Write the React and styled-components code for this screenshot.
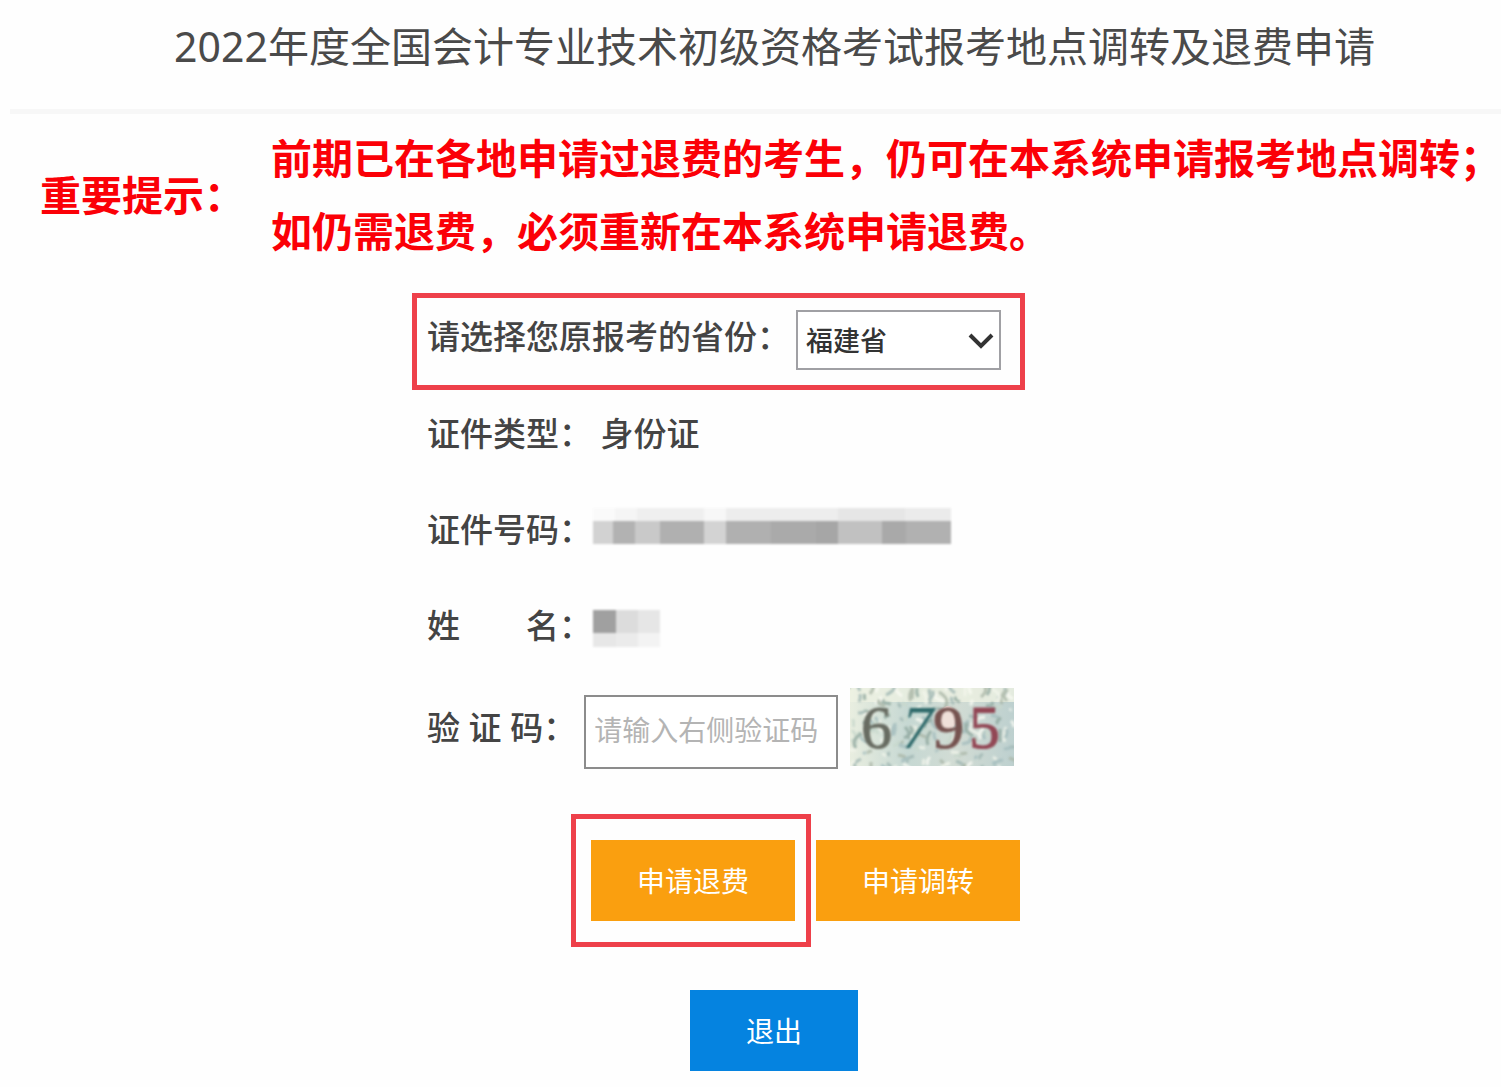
import { useState } from "react";
import styled, { createGlobalStyle } from "styled-components";

const GlobalStyle = createGlobalStyle`
    * {
        box-sizing: border-box;
    }

    body {
        margin: 0;
        background: #fefefe;
        color: #444;
        font-family: "Noto Sans", "Noto Sans CJK SC", sans-serif;
        overflow-x: hidden;
    }

    button, input, select {
        font-family: inherit;
        margin: 0;
    }
`;

const Header = styled.header`
    display: flex;
    align-items: center;
    justify-content: center;
    height: 114px;
    margin-left: 10px;
    padding: 0 0 18px 38px;
    border-bottom: 5px solid #f7f7f7;
`;

const Title = styled.h1`
    margin: 0;
    color: #4a4a4a;
    font-size: 41px;
    font-weight: 400;
    line-height: 60px;
    white-space: nowrap;
`;

const Notice = styled.section`
    display: flex;
    align-items: center;
    gap: 26px;
    padding: 8px 0 0 40px;
    color: #fb0007;
    font-size: 41px;
    font-weight: 700;
    line-height: 73px;
    white-space: nowrap;
`;

const NoticeText = styled.p`
    margin: 0;
`;

const FormArea = styled.main`
    display: flex;
    justify-content: center;
    padding: 25px 64px 16px 0;
`;

const Form = styled.form`
    display: flex;
    flex-direction: column;
    width: 613px;
`;

const Row = styled.div`
    display: flex;
    align-items: center;
    height: 96px;
    padding: 0 0 8px 15px;
    font-size: 33px;
    font-weight: 500;
    line-height: 48px;
    white-space: pre;
`;

const ProvinceRow = styled(Row)`
    align-items: flex-start;
    gap: 6px;
    height: 97px;
    padding: 12px 10px;
    border: 5px solid #ee404a;
`;

const CodeRow = styled(Row)`
    gap: 8px;
    height: 108px;
    padding-bottom: 0;
`;

const Label = styled.label`
    padding: ${props => props.$padding};
    color: #444;
`;

const SelectBox = styled.div`
    position: relative;
    width: 205px;
    height: 60px;

    svg {
        position: absolute;
        top: 22px;
        right: 7px;
        pointer-events: none;
    }
`;

const Select = styled.select`
    appearance: none;
    width: 100%;
    height: 100%;
    padding: 0 8px;
    border: 2px solid #a0a0a4;
    border-radius: 0;
    background: #fff;
    color: #333;
    font-size: 27px;
    font-weight: 500;
`;

const CodeInput = styled.input`
    width: 254px;
    height: 74px;
    padding: 0 8px 4px;
    border: 2px solid #8c8c8c;
    border-radius: 0;
    background: #fff;
    color: #444;
    font-size: 28px;

    &::placeholder {
        color: #b4b4b4;
    }
`;

const CaptchaButton = styled.button`
    height: 78px;
    padding: 0;
    margin: 0 0 11px 4px;
    border: 0;
    background: none;
    cursor: pointer;

    svg {
        display: block;
    }
`;

const Mosaic = styled.span`
    display: flex;
    flex-direction: column;
    margin-left: 1px;
    padding: ${props => props.$padding};
    filter: blur(1px);
`;

const MosaicLine = styled.span`
    display: flex;
    height: ${props => props.$height}px;
`;

const Cell = styled.span`
    width: ${props => props.$width}px;
    background: ${props => props.$color};
`;

const Actions = styled.div`
    display: flex;
    align-items: center;
    gap: 5px;
    margin: 28px 0 43px 159px;
`;

const Highlight = styled.div`
    padding: 21px 11px 21px 15px;
    border: 5px solid #ee404a;
`;

const Button = styled.button`
    width: ${props => props.$width}px;
    height: 81px;
    padding: 0;
    border: 0;
    background: ${props => props.$color};
    color: #fff;
    font-size: 28px;
    line-height: 40px;
    cursor: pointer;
`;

const Exit = styled.div`
    padding-left: 278px;
`;

const idTop = [
    [22, "#fafafa"], [22, "#f5f5f5"], [67, "#efefef"], [22, "#f7f7f7"],
    [112, "#ededed"], [67, "#e6e6e6"], [46, "#ebebeb"],
];
const idBottom = [
    [20, "#d2d2d2"], [22, "#b2b2b2"], [25, "#c9c9c9"], [44, "#b0b0b0"], [22, "#d3d3d3"],
    [45, "#b0b0b0"], [45, "#aaa"], [22, "#a6a6a6"], [44, "#c1c1c1"], [24, "#a9a9a9"], [45, "#b1b1b1"],
];
const nameTop = [[23, "#a0a0a0"], [22, "#dcdcdc"], [22, "#e6e6e6"]];
const nameBottom = [[23, "#e7e7e7"], [22, "#ebebeb"], [22, "#f3f3f3"]];

const Cells = ({ items, height }) => (
    <MosaicLine $height={height}>
        {items.map(([width, color], i) => <Cell key={i} $width={width} $color={color} />)}
    </MosaicLine>
);

// Noise strokes behind the captcha digits
const noiseColors = ["#8fa79e", "#c8d8cc", "#a3bcbd", "#f3f6ec", "#a9b5a6", "#9fb6b2", "#fafbf4"];
const noise = Array.from({ length: 150 }, (_, i) => {
    const x = (i * 61) % 164;
    const y = (i * 37) % 79;
    const dx = ((i * 17) % 29) - 14;
    const dy = ((i * 29) % 31) - 15;
    return { d: `M${x} ${y}q${dx} ${dy / 2} ${dx / 2} ${dy}`, color: noiseColors[(i * 3 + (i >> 2)) % 7] };
});

const Captcha = () => (
    <svg width="164" height="78" viewBox="0 0 164 78" role="img" aria-label="验证码">
        <defs>
            <linearGradient id="paper" x1="0" x2="1" y1="0" y2="0">
                <stop offset="0" stopColor="#e9eee0" />
                <stop offset="0.35" stopColor="#c6d8d3" />
                <stop offset="0.65" stopColor="#d2dcd4" />
                <stop offset="1" stopColor="#bdd0cf" />
            </linearGradient>
            <filter id="soft"><feGaussianBlur stdDeviation="0.8" /></filter>
        </defs>
        <rect width="164" height="78" fill="url(#paper)" />
        <rect width="164" height="14" fill="#edf1e2" opacity="0.8" />
        <g fill="none" strokeWidth="3" opacity="0.8" filter="url(#soft)">
            {noise.map((n, i) => <path key={i} d={n.d} stroke={n.color} />)}
        </g>
        <ellipse cx="98" cy="30" rx="8" ry="12" fill="#efe0d9" />
        <g fontFamily="Liberation Serif, serif" fontSize="62" filter="url(#soft)">
            <text x="11" y="60" fill="#686c62" stroke="#686c62">6</text>
            <text x="52" y="60" fill="#2e696a" fontStyle="italic">7</text>
            <text x="83" y="60" fill="#765250" stroke="#765250">9</text>
            <text x="119" y="60" fill="#924654" stroke="#924654">5</text>
        </g>
    </svg>
);

const App = () => {
    const [province, setProvince] = useState("福建省");
    const [code, setCode] = useState("");

    return (
        <>
            <GlobalStyle />
            <div lang="zh-CN">
                <Header>
                    <Title>2022年度全国会计专业技术初级资格考试报考地点调转及退费申请</Title>
                </Header>
                <Notice>
                    <NoticeText>重要提示：</NoticeText>
                    <NoticeText>
                        前期已在各地申请过退费的考生，仍可在本系统申请报考地点调转；
                        <br />
                        如仍需退费，必须重新在本系统申请退费。
                    </NoticeText>
                </Notice>
                <FormArea>
                    <Form onSubmit={e => e.preventDefault()}>
                        <ProvinceRow>
                            <Label htmlFor="province" $padding="3px 0 0">请选择您原报考的省份：</Label>
                            <SelectBox>
                                <Select
                                    id="province"
                                    value={province}
                                    onChange={e => setProvince(e.target.value)}>
                                    <option value="福建省">福建省</option>
                                </Select>
                                <svg width="26" height="18" viewBox="0 0 26 18" fill="none" stroke="#333" strokeWidth="4">
                                    <path d="M2 3L13 14L24 3" />
                                </svg>
                            </SelectBox>
                        </ProvinceRow>
                        <Row>
                            <span>证件类型： 身份证</span>
                        </Row>
                        <Row>
                            <span>证件号码：</span>
                            <Mosaic $padding="0 0 8px">
                                <Cells items={idTop} height={13} />
                                <Cells items={idBottom} height={23} />
                            </Mosaic>
                        </Row>
                        <Row>
                            <span>姓　　名：</span>
                            <Mosaic $padding="4px 0 0">
                                <Cells items={nameTop} height={23} />
                                <Cells items={nameBottom} height={14} />
                            </Mosaic>
                        </Row>
                        <CodeRow>
                            <Label htmlFor="code" $padding="0 0 8px">验 证 码：</Label>
                            <CodeInput
                                id="code"
                                type="text"
                                placeholder="请输入右侧验证码"
                                value={code}
                                onChange={e => setCode(e.target.value)} />
                            <CaptchaButton type="button">
                                <Captcha />
                            </CaptchaButton>
                        </CodeRow>
                        <Actions>
                            <Highlight>
                                <Button type="submit" $width={204} $color="#fa9f0f">申请退费</Button>
                            </Highlight>
                            <Button type="button" $width={204} $color="#fa9f0f">申请调转</Button>
                        </Actions>
                        <Exit>
                            <Button type="button" $width={168} $color="#0583e0">退出</Button>
                        </Exit>
                    </Form>
                </FormArea>
            </div>
        </>
    );
};

export default App;
